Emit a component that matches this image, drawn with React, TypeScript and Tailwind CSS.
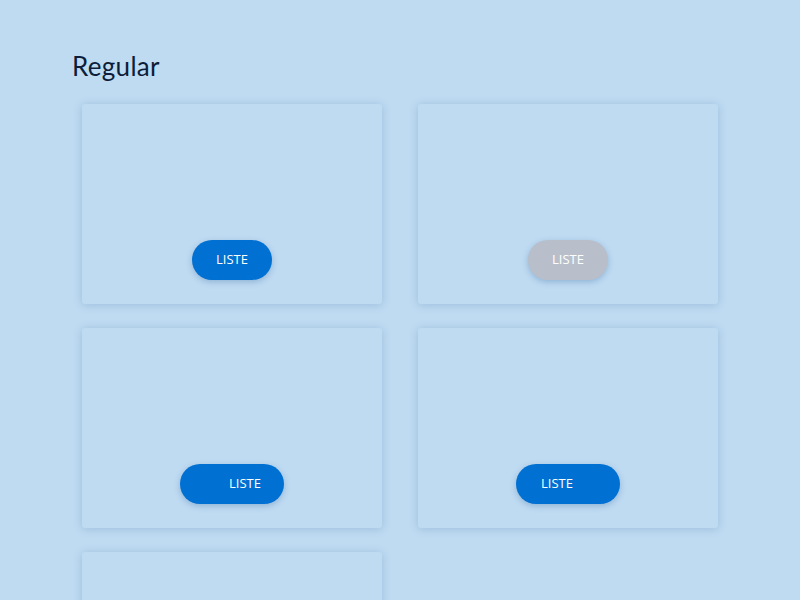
type Variant = "plain" | "disabled" | "iconLeft" | "iconRight";

function ListButton({ variant }: { variant: Variant }) {
  const base =
    "h-10 rounded-full flex items-center text-[13px] text-white shadow-[0_2px_6px_rgba(0,60,130,0.25)]";
  if (variant === "disabled") {
    return <button className={`${base} w-20 justify-center bg-[#b9bfca] text-[#eef1f5]`}>LISTE</button>;
  }
  if (variant === "iconLeft") {
    return (
      <button className={`${base} w-[104px] bg-[#0070d2] pl-[49px]`}>
        LISTE
      </button>
    );
  }
  if (variant === "iconRight") {
    return (
      <button className={`${base} w-[104px] bg-[#0070d2] pl-[25px]`}>
        LISTE
      </button>
    );
  }
  return <button className={`${base} w-20 justify-center bg-[#0070d2]`}>LISTE</button>;
}

function Card({ variant }: { variant?: Variant }) {
  return (
    <div className="w-[300px] h-[200px] rounded-[3px] bg-[#bfdbf2] shadow-[0_1px_10px_rgba(30,80,140,0.22)] flex flex-col items-center justify-end pb-6">
      {variant && <ListButton variant={variant} />}
    </div>
  );
}

export default function App() {
  return (
    <div
      className="w-[800px] h-[600px] overflow-hidden bg-[#bfdbf2] pl-[72px] pt-[50px]"
      style={{ fontFamily: '"Open Sans", "Noto Sans", sans-serif' }}
    >
      <h1
        className="text-[26px] leading-8 tracking-[0.3px] text-[#0c1e3a] mb-[22px]"
        style={{ fontFamily: 'Lato, "Noto Sans", sans-serif' }}
      >
        Regular
      </h1>
      <div className="ml-[10px] grid grid-cols-[300px_300px] gap-x-9 gap-y-6">
        <Card variant="plain" />
        <Card variant="disabled" />
        <Card variant="iconLeft" />
        <Card variant="iconRight" />
        <Card />
      </div>
    </div>
  );
}
